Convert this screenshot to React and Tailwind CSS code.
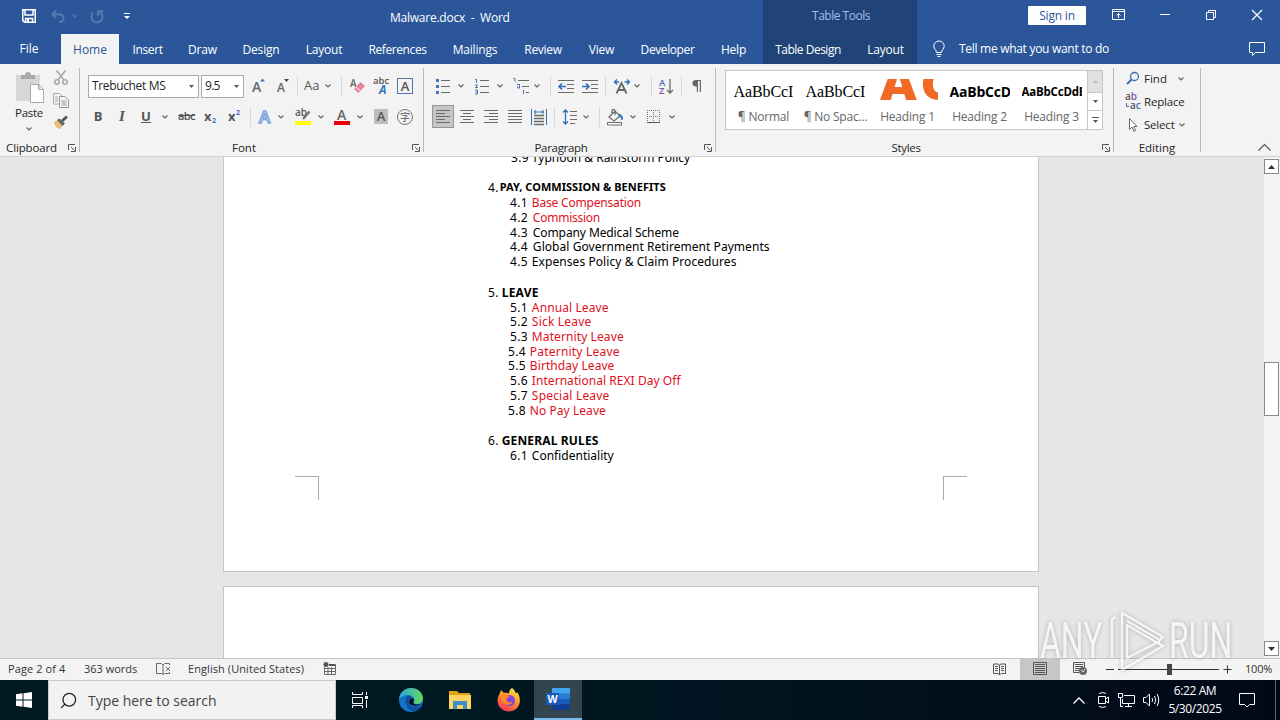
import { Search } from "lucide-react";

const UI = "font-['Open_Sans','Noto_Sans_CJK_SC',sans-serif]";

function Svg({ w = 16, h = 16, className = "", children }) {
    return (
        <svg width={w} height={h} viewBox={`0 0 ${w} ${h}`} fill="none" stroke="#6a6a6a" className={`shrink-0 overflow-visible ${className}`}>
            {children}
        </svg>
    );
}

function Chevron({ className = "", color = "#666" }) {
    return (
        <Svg w={6} h={4} className={className}>
            <path d="M0.5 0.5L3 3L5.5 0.5" stroke={color} strokeWidth="1.2" />
        </Svg>
    );
}

function Caret({ className = "" }) {
    return (
        <Svg w={5} h={3} className={className}>
            <path d="M0 0H5L2.5 3Z" fill="#555" stroke="none" />
        </Svg>
    );
}

function Sep({ className = "" }) {
    return <div className={`h-5 w-px shrink-0 bg-[#d8d8d8] ${className}`} />;
}

function GroupSep() {
    return <div className="mt-1 h-[84px] w-px shrink-0 bg-[#b8b8b8]" />;
}

function Launcher({ className = "" }) {
    return (
        <Svg w={8} h={8} className={className}>
            <path d="M0.5 6V0.5H7M3 3L6.5 6.5M7.5 3V7.5H3" stroke="#555" />
        </Svg>
    );
}

const TABS = [
    { label: "File", box: "w-[61px] pr-[3px] pb-0.5" },
    { label: "Home", box: "w-[58px] bg-[#f3f3f3] text-[#2b579a]" },
    { label: "Insert", box: "w-[57px] tracking-[-0.35px]" },
    { label: "Draw", box: "w-[53px] tracking-[-0.2px]" },
    { label: "Design", box: "w-[64px] tracking-[-0.2px]" },
    { label: "Layout", box: "w-[62px] tracking-[-0.2px]" },
    { label: "References", box: "w-[85px] tracking-[-0.4px]" },
    { label: "Mailings", box: "w-[70px] tracking-[-0.2px]" },
    { label: "Review", box: "w-[66px] tracking-[-0.3px]" },
    { label: "View", box: "w-[51px] tracking-[-0.2px]" },
    { label: "Developer", box: "w-[81px] tracking-[-0.4px]" },
    { label: "Help", box: "w-[51px] tracking-[-0.2px]" },
];

function TitleBar() {
    return (
        <header className="flex h-16 bg-[#2b579a] text-xs text-white">
            <div className="flex w-[763px] flex-col">
                <div className="flex h-8 items-center">
                    <Svg w={14} h={14} className="ml-[22px]">
                        <path d="M0.75 0.75H13.25V13.25H2.5L0.75 11.5Z M3 1V6H11V1 M3.5 13V9.5H10.5V13" stroke="#fff" strokeWidth="1.5" />
                        <path d="M5 10H7V13H5Z" fill="#fff" stroke="none" />
                    </Svg>
                    <Svg w={14} h={13} className="ml-[15px]">
                        <path d="M5 0.5L1.5 4.5L5 8M2 4.5H8.5C14 4.5 14 12 8 12" stroke="#5478b0" strokeWidth="2" />
                    </Svg>
                    <Chevron className="ml-[7px]" color="#5478b0" />
                    <Svg w={14} h={13} className="ml-3">
                        <path d="M3.5 2.5A5.5 5.5 0 1 0 9 1.7M8 6V1.2H13.5" stroke="#5478b0" strokeWidth="2" />
                    </Svg>
                    <Svg w={6} h={6} className="ml-5">
                        <path d="M0 0.5H6" stroke="#fff" />
                        <path d="M0 3H6L3 6Z" fill="#fff" stroke="none" />
                    </Svg>
                    <span className="mt-1 ml-[260px] tracking-[-0.24px] whitespace-pre">Malware.docx  -  Word</span>
                </div>
                <nav className="mt-0.5 flex h-[30px]">
                    {TABS.map((tab) => (
                        <div key={tab.label} className={`flex items-center justify-center pt-0.5 ${tab.box}`}>
                            {tab.label}
                        </div>
                    ))}
                </nav>
            </div>
            <div className="flex w-[154px] flex-col bg-[#204477]">
                <div className="flex h-8 items-center justify-center pl-0.5 tracking-[-0.5px] text-[#a5bde3]">Table Tools</div>
                <div className="flex h-8 items-center pt-1">
                    <span className="w-[90px] text-center tracking-[-0.5px]">Table Design</span>
                    <span className="w-[64px] pl-px text-center tracking-[-0.2px]">Layout</span>
                </div>
            </div>
            <div className="flex flex-1 flex-col">
                <div className="flex h-8 items-center">
                    <button className="ml-[111px] h-[19px] w-[58px] rounded-[1px] bg-white pt-px leading-none tracking-[-0.2px] text-[#2b579a]">Sign in</button>
                    <Svg w={13} h={11} className="-mt-0.5 ml-[26px]">
                        <path d="M0.5 0.5H12.5V10.5H0.5ZM0.5 2.5H12.5M6.5 9V4.5M4.5 6.5L6.5 4.5L8.5 6.5" stroke="#fff" />
                    </Svg>
                    <Svg w={10} h={2} className="-mt-0.5 ml-[35px]">
                        <path d="M0 0.5H10" stroke="#fff" />
                    </Svg>
                    <Svg w={10} h={10} className="-mt-0.5 ml-9">
                        <path d="M0.5 2.5H7.5V9.5H0.5ZM2.5 2.5V0.5H9.5V7.5H7.5" stroke="#fff" />
                    </Svg>
                    <Svg w={10} h={10} className="-mt-0.5 ml-9">
                        <path d="M0 0L10 10M10 0L0 10" stroke="#fff" strokeWidth="1.2" />
                    </Svg>
                </div>
                <div className="flex h-[34px] items-center pt-0.5">
                    <Svg w={12} h={16} className="ml-4">
                        <path d="M3.5 11.5C3.5 9 0.8 8 0.8 5.2A5 5 0 0 1 11.2 5.2C11.2 8 8.5 9 8.5 11.5ZM3.5 13.5H8.5M4.5 15.5H7.5" stroke="#fff" />
                    </Svg>
                    <span className="ml-[14px] tracking-[-0.29px]">Tell me what you want to do</span>
                    <Svg w={17} h={14} className="mr-[14px] ml-auto">
                        <path d="M0.5 0.5H15.5V10.5H6.5L3.5 13.5V10.5H0.5Z" stroke="#fff" />
                    </Svg>
                </div>
            </div>
        </header>
    );
}

function Clipboard() {
    return (
        <section className="flex w-[79px] flex-col">
            <div className="flex h-[76px]">
                <div className="flex w-[49px] flex-col items-center pt-2 pl-[9px]">
                    <Svg w={29} h={31} className="ml-0.5">
                        <path d="M0 3H24V29H0Z" fill="#d8d6d6" stroke="none" />
                        <path d="M5 7V3H9C9 -1 15 -1 15 3H19V7Z" fill="#a9a9a9" stroke="none" />
                        <path d="M14.5 12.5H22.5L27.5 17.5V30.5H14.5ZM22.5 12.5V17.5H27.5" fill="#fff" stroke="#aaa" />
                    </Svg>
                    <span className="mt-0.5 text-[11.5px] leading-4 tracking-[-0.3px]">Paste</span>
                    <Chevron className="mt-1.5" />
                </div>
                <div className="flex w-6 flex-col items-center gap-[7px] pt-1.5">
                    <Svg w={14} h={16}>
                        <path d="M2.5 0.5L10 10M11.5 0.5L4 10" stroke="#aaa" strokeWidth="1.6" />
                        <circle cx="3" cy="12" r="2.2" stroke="#aaa" strokeWidth="1.6" />
                        <circle cx="11" cy="12" r="2.2" stroke="#aaa" strokeWidth="1.6" />
                    </Svg>
                    <Svg w={16} h={15}>
                        <path d="M0.5 0.5H6.5L9 3V11H0.5ZM2 4H5M2 6H5M2 8H5" stroke="#aaa" />
                        <path d="M6.5 3.5H12L15.5 7V14.5H6.5ZM8.5 8H13.5M8.5 10H13.5M8.5 12H13.5" fill="#f3f3f3" stroke="#999" />
                    </Svg>
                    <Svg w={16} h={15}>
                        <path d="M1 7L5 5L10 10L7 14C4 14 2 11 1 7Z" fill="#e8bd73" stroke="none" />
                        <path d="M4 5L6.5 3.5L12 8.5L9.5 11Z" fill="#666" stroke="none" />
                        <path d="M9 6L14 1.5" stroke="#555" strokeWidth="3" />
                    </Svg>
                </div>
            </div>
            <div className="flex h-4 items-center">
                <span className="w-[63px] text-center text-[11.5px] tracking-[-0.15px]">Clipboard</span>
                <Launcher className="ml-[5px]" />
            </div>
        </section>
    );
}

function FontGroup() {
    return (
        <section className="flex w-[343px] flex-col">
            <div className="mt-[11px] flex h-[22px] items-center pl-2">
                <div className="flex h-[23px] w-[111px] items-center border border-[#ababab] bg-white pl-[3px] text-xs tracking-[-0.35px]">
                    Trebuchet MS
                    <Caret className="mr-1 ml-auto" />
                </div>
                <div className="ml-0.5 flex h-[23px] w-[43px] items-center border border-[#ababab] bg-white pl-[3px] text-xs tracking-[-0.7px]">
                    9.5
                    <Caret className="mr-1 ml-auto" />
                </div>
                <Svg w={14} className="ml-2">
                    <text x="0" y="14" fontSize="14" fontWeight="600" fill="#666" stroke="none">A</text>
                    <path d="M8 3.5L10.5 0.5L13 3.5Z" fill="#3b6fb6" stroke="none" />
                </Svg>
                <Svg w={12} className="ml-[11px]">
                    <text x="0" y="14" fontSize="12" fontWeight="600" fill="#666" stroke="none">A</text>
                    <path d="M7 1H12L9.5 4Z" fill="#444" stroke="none" />
                </Svg>
                <Sep className="ml-2" />
                <span className="ml-1.5 w-4 text-[13px] text-[#555]">Aa</span>
                <Chevron className="ml-[5px]" />
                <Sep className="ml-[10px]" />
                <Svg className="ml-2">
                    <text x="0" y="8.5" fontSize="10" fontWeight="600" fill="#666" stroke="none">A</text>
                    <path d="M4 11L10.5 4L15 8L8.5 15Z" fill="#e8829a" stroke="none" />
                    <path d="M6 9L10.5 13" stroke="#fff" />
                </Svg>
                <Svg className="ml-2">
                    <text x="-1" y="6" fontSize="9.5" fontWeight="600" fill="#555" stroke="none">abc</text>
                    <text x="5" y="16" fontSize="12" fontWeight="700" fontStyle="italic" fill="#3b78bd" stroke="none">A</text>
                </Svg>
                <div className="ml-[7px] flex size-4 items-center justify-center border border-[#5376a8] text-[13px] leading-none font-semibold text-[#555]">A</div>
            </div>
            <div className="mt-2 flex h-[23px] items-center text-[#555]">
                <span className="ml-2 w-5 text-center text-[13px] font-bold">B</span>
                <span className="ml-1 w-5 text-center font-['Liberation_Serif',serif] text-[15px] font-bold italic">I</span>
                <span className="ml-1 w-5 text-center text-[13px] font-bold underline">U</span>
                <Chevron className="ml-[6px]" />
                <span className="ml-[10px] w-4 text-[11px] font-semibold tracking-[-0.6px] line-through">abc</span>
                <Svg className="ml-[10px]">
                    <text x="0" y="12" fontSize="13" fontWeight="700" fill="#555" stroke="none">x</text>
                    <text x="8" y="14" fontSize="7" fontWeight="700" fill="#3b6fb6" stroke="none">2</text>
                </Svg>
                <Svg className="ml-2">
                    <text x="0" y="12" fontSize="13" fontWeight="700" fill="#555" stroke="none">x</text>
                    <text x="8" y="6" fontSize="7" fontWeight="700" fill="#3b6fb6" stroke="none">2</text>
                </Svg>
                <Sep className="ml-1.5" />
                <Svg className="ml-[7px]">
                    <text x="1" y="14" fontSize="17" fontWeight="600" fill="#fff" stroke="#7ba4dd" strokeWidth="1.4">A</text>
                </Svg>
                <Chevron className="ml-1" />
                <Svg className="ml-[11px]">
                    <text x="0" y="7" fontSize="10" fontWeight="600" fill="#555" stroke="none">ab</text>
                    <path d="M8 10L14.5 2.5" stroke="#777" strokeWidth="2.5" />
                    <path d="M0 12H16V16H0Z" fill="#ffff00" stroke="none" />
                </Svg>
                <Chevron className="ml-[7px]" />
                <Svg className="ml-[10px]">
                    <text x="3" y="11" fontSize="14" fontWeight="600" fill="#666" stroke="none">A</text>
                    <path d="M0 12H16V16H0Z" fill="#e8000c" stroke="none" />
                </Svg>
                <Chevron className="ml-[7px]" />
                <div className="ml-[11px] flex h-[15px] w-[14px] items-center justify-center bg-[#bdbdbd] text-[13px] leading-none font-semibold">A</div>
                <div className="ml-[9px] flex size-4 items-center justify-center rounded-full border border-[#777] text-[10px] leading-none">字</div>
            </div>
            <div className="mt-3 flex h-4 items-center">
                <span className="ml-[90px] w-[148px] text-center text-[11.5px]">Font</span>
                <Launcher className="ml-[94px]" />
            </div>
        </section>
    );
}

function Paragraph() {
    return (
        <section className="flex w-[291px] flex-col">
            <div className="mt-[10px] flex h-[23px] items-center">
                <Svg className="ml-[11px]">
                    <path d="M6 2.5H15M6 8.5H15M6 14.5H15" />
                    <path d="M1 1H4V4H1ZM1 7H4V10H1ZM1 13H4V16H1Z" fill="#4472b8" stroke="none" />
                </Svg>
                <Chevron className="ml-[7px]" />
                <Svg className="ml-[10px]">
                    <path d="M6 2.5H15M6 8.5H15M6 14.5H15" />
                    <path d="M1 1.5H2.5V5M1 7H3.5L1.5 9.5H4M1 12H3.5V16H1M1.5 14H3.5" stroke="#4472b8" />
                </Svg>
                <Chevron className="ml-[7px]" />
                <Svg className="ml-[10px]">
                    <path d="M5 2.5H16M9 8.5H16M13 14.5H16" />
                    <path d="M0.5 0.5H2V4M4 6.5H6.5V10H4.5V8.5M10.5 12V16" stroke="#4472b8" />
                </Svg>
                <Chevron className="ml-[5px]" />
                <Sep className="ml-[10px]" />
                <Svg className="ml-[7px]">
                    <path d="M0 2.5H16M9 6.5H16M9 10.5H16M0 14.5H16" />
                    <path d="M8 8.5H1M4 5.5L1 8.5L4 11.5" stroke="#2f70b7" strokeWidth="1.6" />
                </Svg>
                <Svg className="ml-2">
                    <path d="M0 2.5H16M9 6.5H16M9 10.5H16M0 14.5H16" />
                    <path d="M0 8.5H7M4 5.5L7 8.5L4 11.5" stroke="#2f70b7" strokeWidth="1.6" />
                </Svg>
                <Sep className="ml-[7px]" />
                <Svg className="ml-2">
                    <path d="M2.5 15.5L7.5 5L12.5 15.5M4.5 12H10.5" stroke="#666" strokeWidth="1.8" />
                    <path d="M0 4H5M3 1.5L0.5 4L3 6.5M10.5 4H15M13 1.5L15.5 4L13 6.5" stroke="#2f70b7" strokeWidth="1.3" />
                </Svg>
                <Chevron className="ml-1" />
                <Sep className="ml-[11px]" />
                <Svg className="ml-[6px]">
                    <text x="1" y="7.5" fontSize="9.5" fontWeight="600" fill="#3b6fb6" stroke="none">A</text>
                    <text x="1" y="16" fontSize="9.5" fontWeight="600" fill="#8254a8" stroke="none">Z</text>
                    <path d="M12 1V15M9 12L12 15L15 12" strokeWidth="1.3" />
                </Svg>
                <Sep className="ml-[7px]" />
                <Svg w={12} h={14} className="ml-[9px]">
                    <path d="M5 1H10V13H8.8V2H7V13H5.8V7.5C0 8 0 1 5 1Z" fill="#666" stroke="none" />
                </Svg>
            </div>
            <div className="mt-2 flex h-[23px] items-center">
                <div className="ml-2 flex h-[23px] w-[22px] items-center justify-center border border-[#969696] bg-[#c5c5c5]">
                    <Svg w={14} h={13}>
                        <path d="M0 0.5H14M0 3.5H9M0 6.5H14M0 9.5H9M0 12.5H14" />
                    </Svg>
                </div>
                <Svg w={14} h={13} className="ml-[6px]">
                    <path d="M0 0.5H14M3 3.5H11M0 6.5H14M3 9.5H11M0 12.5H14" />
                </Svg>
                <Svg w={14} h={13} className="ml-[10px]">
                    <path d="M0 0.5H14M5 3.5H14M0 6.5H14M5 9.5H14M0 12.5H14" />
                </Svg>
                <Svg w={14} h={13} className="ml-[10px]">
                    <path d="M0 0.5H14M0 3.5H14M0 6.5H14M0 9.5H14M0 12.5H14" />
                </Svg>
                <Svg className="ml-[9px]">
                    <path d="M3 6.5H13M3 9.5H13M3 12.5H13M3 15.5H13" strokeWidth="1.3" />
                    <path d="M0.5 0V16M15.5 0V16M3 3H13M5 1L3 3L5 5M11 1L13 3L11 5" stroke="#2f70b7" />
                </Svg>
                <Sep className="ml-[7px]" />
                <Svg className="ml-2">
                    <path d="M7 2.5H14M7 6.5H14M7 10.5H14M7 14.5H12" />
                    <path d="M2.5 1V15M0 3.5L2.5 1L5 3.5M0 12.5L2.5 15L5 12.5" stroke="#2f70b7" strokeWidth="1.3" />
                </Svg>
                <Chevron className="ml-1" />
                <Sep className="ml-[10px]" />
                <Svg className="ml-[7px]">
                    <path d="M2 8L8 2L13 7L7 12ZM5 5V1.5C5 0 8 0 8 1.5V6" strokeWidth="1.2" />
                    <path d="M12 5C15 6 16 8 15 11C14 8 13 7 12 7Z" fill="#3b78bd" stroke="#3b78bd" />
                    <path d="M0.5 13.5H14.5V16H0.5Z" fill="#fff" />
                </Svg>
                <Chevron className="ml-[7px]" />
                <Svg w={13} h={13} className="ml-[11px]">
                    <path d="M0 0.5H13M0.5 0V13M12.5 0V13M6.5 0V13M0 6.5H13" stroke="#777" strokeDasharray="1 1" />
                    <path d="M0 12.5H13" stroke="#555" />
                </Svg>
                <Chevron className="ml-[9px]" />
            </div>
            <div className="mt-3 flex h-4 items-center">
                <span className="ml-[97px] w-20 text-center text-[11.5px] tracking-[-0.3px]">Paragraph</span>
                <Launcher className="ml-[103px]" />
            </div>
        </section>
    );
}

const STYLES = [
    { name: "¶ Normal", sample: "AaBbCcI", font: "font-['Liberation_Serif',serif] text-base tracking-[-0.1px] text-black" },
    { name: "¶ No Spac...", sample: "AaBbCcI", font: "font-['Liberation_Serif',serif] text-base tracking-[-0.1px] text-black" },
    { name: "Heading 1", sample: "AC", font: "inline-block self-start -mt-[18px] ml-0.5 origin-left scale-x-115 font-extrabold text-[44px] leading-none tracking-[3px] text-[#f06a25]" },
    { name: "Heading 2", sample: "AaBbCcD", font: "font-bold text-sm tracking-[-0.2px] text-black" },
    { name: "Heading 3", sample: "AaBbCcDdE", font: "font-bold text-[11.5px] tracking-[-0.2px] text-black" },
];

function Styles() {
    return (
        <section className="flex w-[397px] flex-col">
            <div className="mt-1.5 ml-[9px] flex h-[60px] w-[378px] border border-[#c6c6c6] bg-white">
                {STYLES.map((style, i) => (
                    <div key={i} className="ml-px flex w-[71px] flex-col items-center first:ml-0.5">
                        <div className="mt-2 flex h-[26px] w-[60px] items-center overflow-hidden">
                            <span className={`whitespace-nowrap ${style.font}`}>{style.sample}</span>
                        </div>
                        <span className="mt-0.5 text-xs leading-5 tracking-[-0.2px] whitespace-nowrap text-[#666]">{style.name}</span>
                    </div>
                ))}
                <div className="ml-auto flex w-[15px] flex-col border-l border-[#c6c6c6]">
                    <div className="flex h-[21px] items-center justify-center bg-[#e1e1e1]">
                        <Svg w={5} h={3}><path d="M0 3H5L2.5 0Z" fill="#bbb" stroke="none" /></Svg>
                    </div>
                    <div className="flex h-[19px] items-center justify-center border-y border-[#c6c6c6]"><Caret /></div>
                    <div className="flex h-[18px] items-center justify-center">
                        <Svg w={7} h={6}>
                            <path d="M0 0.5H7" stroke="#555" />
                            <path d="M1 3H6L3.5 6Z" fill="#555" stroke="none" />
                        </Svg>
                    </div>
                </div>
            </div>
            <div className="mt-[10px] flex h-4 items-center">
                <span className="ml-[150px] w-20 text-center text-[11.5px] tracking-[-0.3px]">Styles</span>
                <Launcher className="ml-[156px]" />
            </div>
        </section>
    );
}

function Editing() {
    return (
        <section className="flex w-[86px] flex-col text-[11.5px]">
            <div className="mt-[3px] ml-3 flex h-[23px] items-center">
                <Svg w={14} h={13}>
                    <circle cx="8.5" cy="4.5" r="4" stroke="#3b6fa8" strokeWidth="1.3" />
                    <path d="M5.5 7.5L1 12" stroke="#3b6fa8" strokeWidth="2" />
                </Svg>
                <span className="ml-1 w-[34px]">Find</span>
                <Chevron />
            </div>
            <div className="ml-[11px] flex h-[23px] items-center">
                <Svg>
                    <text x="0" y="6" fontSize="10" fontWeight="600" fill="#555" stroke="none">a<tspan fill="#8254a8">b</tspan></text>
                    <text x="5" y="15" fontSize="10" fontWeight="600" fill="#555" stroke="none">a<tspan fill="#3b6fb6">c</tspan></text>
                    <path d="M1.5 9V12.5H4" stroke="#3b6fb6" />
                </Svg>
                <span className="ml-[3px] tracking-[-0.2px]">Replace</span>
            </div>
            <div className="ml-[11px] flex h-[23px] items-center">
                <Svg w={16} h={14}>
                    <path d="M4.5 0.5V11.5L7 9L9 13.5L10.5 12.5L8.8 8.5H12Z" fill="#fff" />
                </Svg>
                <span className="ml-[3px] w-[35px] tracking-[-0.2px]">Select</span>
                <Chevron />
            </div>
            <span className="mt-1 w-full text-center leading-4">Editing</span>
        </section>
    );
}

function Ribbon() {
    return (
        <div className="flex h-[93px] border-b border-[#d2d0ce] bg-[#f3f3f3] text-[#262626]">
            <Clipboard />
            <GroupSep />
            <FontGroup />
            <GroupSep />
            <Paragraph />
            <GroupSep />
            <Styles />
            <GroupSep />
            <Editing />
            <GroupSep />
            <Svg w={13} h={7} className="mt-auto mr-[9px] mb-[5px] ml-auto">
                <path d="M0.5 6.5L6.5 0.5L12.5 6.5" stroke="#555" strokeWidth="1.2" />
            </Svg>
        </div>
    );
}

const LINES = [
    { num: "3.9", text: "Typhoon & Rainstorm Policy", row: "h-[15px] pl-[287px]", style: "ml-[3px]" },
    { row: "h-[15px]" },
    { num: "4.", text: "PAY, COMMISSION & BENEFITS", row: "h-[15px] pl-[264px]", style: "ml-px font-bold text-[11px] tracking-[0.03px]" },
    { num: "4.1", text: "Base Compensation", row: "h-[15px] pl-[286px]", style: "ml-1 tracking-[-0.19px]", red: true },
    { num: "4.2", text: "Commission", row: "h-[15px] pl-[286px]", style: "ml-[5px] tracking-[-0.25px]", red: true },
    { num: "4.3", text: "Company Medical Scheme", row: "h-[15px] pl-[286px]", style: "ml-[5px] tracking-[-0.1px]" },
    { num: "4.4", text: "Global Government Retirement Payments", row: "h-[14px] pl-[286px]", style: "ml-[5px] tracking-[0.05px]" },
    { num: "4.5", text: "Expenses Policy & Claim Procedures", row: "h-[15px] pl-[286px]", style: "ml-1 tracking-[0.07px]" },
    { row: "h-4" },
    { num: "5.", text: "LEAVE", row: "h-[15px] pl-[264px]", style: "ml-[3px] font-bold tracking-[0.25px]" },
    { num: "5.1", text: "Annual Leave", row: "h-[15px] pl-[286px]", style: "ml-1 tracking-[0.1px]", red: true },
    { num: "5.2", text: "Sick Leave", row: "h-[14px] pl-[286px]", style: "ml-1 tracking-[0.2px]", red: true },
    { num: "5.3", text: "Maternity Leave", row: "h-[15px] pl-[286px]", style: "ml-1 tracking-[0.1px]", red: true },
    { num: "5.4", text: "Paternity Leave", row: "h-[15px] pl-[284px]", style: "ml-1 tracking-[0.2px]", red: true },
    { num: "5.5", text: "Birthday Leave", row: "h-[14px] pl-[284px]", style: "ml-1 tracking-[0.07px]", red: true },
    { num: "5.6", text: "International REXI Day Off", row: "h-[15px] pl-[286px]", style: "ml-1 tracking-[0.05px]", red: true },
    { num: "5.7", text: "Special Leave", row: "h-[15px] pl-[286px]", style: "ml-1 tracking-[0.19px]", red: true },
    { num: "5.8", text: "No Pay Leave", row: "h-[15px] pl-[284px]", style: "ml-1 tracking-[0.05px]", red: true },
    { row: "h-[15px]" },
    { num: "6.", text: "GENERAL RULES", row: "h-[15px] pl-[264px]", style: "ml-[3px] font-bold tracking-[0.15px]" },
    { num: "6.1", text: "Confidentiality", row: "h-[15px] pl-[286px]", style: "ml-1" },
];

function Document() {
    return (
        <main className="flex h-[501px] bg-[#e6e6e6]">
            <div className="flex h-full flex-1 flex-col overflow-hidden pl-[223px]">
                <div className="h-[415px] w-[816px] shrink-0 overflow-hidden border border-t-0 border-[#c6c6c6] bg-white">
                    <div className="-mt-[7px] font-['Noto_Sans','Open_Sans',sans-serif] text-[12px] text-black">
                        {LINES.map((line, i) => (
                            <div key={i} className={`flex items-center whitespace-nowrap ${line.row}`}>
                                {line.num && <span className="tracking-[0.3px]">{line.num}</span>}
                                {line.text && (
                                    <span className={`${line.style} ${line.red ? "text-[#e0101c]" : ""}`}>{line.text}</span>
                                )}
                            </div>
                        ))}
                    </div>
                    {/* margin crop marks */}
                    <div className="mt-[13px] flex justify-between pr-[71px] pl-[71px]">
                        <div className="size-6 border-t border-r border-[#ababab]" />
                        <div className="size-6 border-t border-l border-[#ababab]" />
                    </div>
                </div>
                <div className="mt-[14px] h-[90px] w-[816px] shrink-0 border border-[#c6c6c6] bg-white" />
            </div>
            <div className="flex w-4 flex-col bg-[#f3f3f3] pt-0.5 pb-0.5">
                <div className="flex h-[15px] w-[15px] items-center justify-center border border-[#8a8a8a] bg-white">
                    <Svg w={7} h={4}><path d="M0 4H7L3.5 0Z" fill="#333" stroke="none" /></Svg>
                </div>
                <div className="mt-[188px] h-[54px] w-[15px] border border-[#8a8a8a] bg-white" />
                <div className="mt-auto flex h-[15px] w-[15px] items-center justify-center border border-[#8a8a8a] bg-white">
                    <Svg w={7} h={4}><path d="M0 0H7L3.5 4Z" fill="#333" stroke="none" /></Svg>
                </div>
            </div>
        </main>
    );
}

function StatusBar() {
    return (
        <div className="flex h-[22px] items-center border-t border-[#c6c6c6] bg-[#f3f3f3] text-[11px] text-[#333]">
            <span className="ml-2 w-[76px] tracking-[0.1px]">Page 2 of 4</span>
            <span className="w-[72px]">363 words</span>
            <Svg w={15} h={13} className="-mt-0.5">
                <path d="M0.5 1.5H5.5L7 3V12.5L5.5 11.5H0.5ZM7 3L8.5 1.5H13.5V3M7 12.5L8.5 11.5H13.5V10M10 5L14 9M14 5L10 9" />
            </Svg>
            <span className="ml-[17px] w-[135px] tracking-[0.08px]">English (United States)</span>
            <Svg w={13} h={13} className="-mt-0.5">
                <path d="M1.5 5V12.5H12.5V2.5H6M2 6.5H12M2 9.5H12M5 5V12M8.5 5V12" />
                <circle cx="3" cy="2.5" r="2.5" fill="#555" stroke="none" />
                <path d="M6 2H12V4H6Z" fill="#555" stroke="none" />
            </Svg>
            <Svg w={13} h={12} className="-mt-0.5 mr-[14px] ml-auto">
                <path d="M6.5 2L5 1H0.5V10.5H5L6.5 12L8 10.5H12.5V1H8L6.5 2V12M2 3.5H5M2 5.5H5M2 7.5H5M8 3.5H11M8 5.5H11M8 7.5H11" stroke="#555" />
            </Svg>
            <div className="flex h-full w-10 items-center justify-center bg-[#c6c6c6]">
                <Svg w={14} h={13} className="-mt-0.5">
                    <path d="M0.5 0.5H13.5V12.5H0.5ZM2 2.5H12M2 4.5H12M2 6.5H12M2 8.5H12M2 10.5H12" stroke="#555" />
                </Svg>
            </div>
            <Svg w={14} h={13} className="-mt-0.5 ml-[13px]">
                <path d="M6 10.5H0.5V0.5H11.5V5M2 2.5H10M2 4.5H10M2 6.5H7M2 8.5H6" stroke="#555" />
                <circle cx="10" cy="9" r="4" fill="#666" stroke="none" />
                <path d="M8 8L10 10L12 7" stroke="#ddd" />
            </Svg>
            <Svg w={8} h={1} className="ml-[19px]"><path d="M0 0.5H8" stroke="#333" /></Svg>
            <Svg w={101} h={11} className="ml-[4px]">
                <path d="M0 5.5H101" stroke="#333" />
                <path d="M49 0H54V11H49Z" fill="#444" stroke="none" />
            </Svg>
            <Svg w={9} h={9} className="ml-[4px]"><path d="M0.5 4.5H8.5M4.5 0.5V8.5" stroke="#333" /></Svg>
            <span className="mr-[8px] ml-[13px] w-[27px] tracking-[-0.2px]">100%</span>
        </div>
    );
}

function EdgeLogo() {
    return (
        <svg width="24" height="24" viewBox="0 0 24 24">
            <defs>
                <linearGradient id="edgeTop" x1="0" x2="1">
                    <stop offset="0" stopColor="#2aa8e0" />
                    <stop offset="1" stopColor="#64d85a" />
                </linearGradient>
            </defs>
            <circle cx="12" cy="12" r="12" fill="#1473c8" />
            <path d="M0 11C1 4 6 0 12 0C19 0 24 5 24 10.5C24 14 21 16 18 16C15 16 14 15 14.5 14C17 10 13 7 9 7C5 7 1.5 9 0 11Z" fill="url(#edgeTop)" />
            <path d="M9 7.5C4 11 7 22 15 23.5C19 22.5 22 20 23 17.5C19 20 10.5 20 9.5 14C9.5 11.5 11 10 12.5 9.5C12 8 10.5 7.3 9 7.5Z" fill="#124e9a" />
            <path d="M14.5 14C13.5 16 17 18 22.5 15.5C20 19 10 19 10 13.5C10 11 13 9.5 14 10.5C15.5 11.5 15 13 14.5 14Z" fill="#04151f" />
        </svg>
    );
}

function FirefoxLogo() {
    return (
        <svg width="24" height="24" viewBox="0 0 24 24">
            <defs>
                <linearGradient id="fox" x1="0.8" y1="0" x2="0.3" y2="1">
                    <stop offset="0" stopColor="#ffe645" />
                    <stop offset="0.5" stopColor="#ff9026" />
                    <stop offset="1" stopColor="#f7305e" />
                </linearGradient>
            </defs>
            <path d="M15 0C17 1 18 3 18.5 5C19.5 5 20 4.5 20 4C25 10 24 23 12 23.5C5 23.5 0.5 18 0.5 12.5C0.5 9 2 7 3 5L4 2L7 5C9 4.5 11 5 12 5.5C12 3 13 1 15 0Z" fill="url(#fox)" />
            <circle cx="12.5" cy="12.5" r="5.5" fill="#8445dc" />
            <path d="M4 6C7 5 10 6 12.5 9C11 9.5 9 10 9.5 12C10 14.5 13 15 15.5 14C14 18 6 18 5 12Z" fill="#ff8a22" />
        </svg>
    );
}

function Taskbar() {
    return (
        <footer className="flex h-10 items-center bg-linear-to-r from-[#001a22] via-[#001722] to-[#020817] text-white">
            <div className="flex w-12 justify-center">
                <svg width="16" height="16" viewBox="0 0 16 16" fill="#fff">
                    <path d="M0 2.2L6.5 1.3V7.5H0ZM7.5 1.2L16 0V7.5H7.5ZM0 8.5H6.5V14.7L0 13.8ZM7.5 8.5H16V16L7.5 14.8Z" />
                </svg>
            </div>
            <div className="flex h-full w-72 items-center border border-[#c9c9c9] bg-[#f2f2f2] text-[#444]">
                <Search size={19} strokeWidth={1.6} className="ml-[10px] -scale-x-100 text-[#222]" />
                <span className="mt-0.5 ml-[10px] text-sm tracking-[-0.02px]">Type here to search</span>
            </div>
            <Svg w={17} h={16} className="ml-[16px]">
                <path d="M0.5 0V2.5H10.5V0M0.5 5.5H10.5V11.5H0.5ZM0.5 16V13.5H10.5V16M14.5 0V3M14.5 8V16" stroke="#fff" />
                <path d="M13 4H16V7H13Z" fill="#fff" stroke="none" />
            </Svg>
            <div className="ml-[30px]"><EdgeLogo /></div>
            <svg width="22" height="20" viewBox="0 0 22 20" className="ml-[26px]">
                <path d="M0 1H8L10 3H21V18H0Z" fill="#e5a018" />
                <path d="M0 5H22V19H0Z" fill="#fcd462" />
                <path d="M4 19V11H18V19H14V15H8V19Z" fill="#3d8fc9" />
            </svg>
            <div className="ml-[26px]"><FirefoxLogo /></div>
            <div className="ml-[13px] flex h-full w-12 items-center justify-center border-b-2 border-[#76b9ed] bg-[#33454e]">
                <svg width="24" height="22" viewBox="0 0 24 22">
                    <path d="M6 0H24V6H6Z" fill="#41a5ee" />
                    <path d="M6 5.5H24V11H6Z" fill="#2b7cd3" />
                    <path d="M6 11H24V16H6Z" fill="#185abd" />
                    <path d="M6 16H24V22H6Z" fill="#103f91" />
                    <path d="M0 5H13V17H0Z" fill="#185abd" />
                    <text x="1.5" y="15" fontSize="10.5" fontWeight="700" fill="#fff">W</text>
                </svg>
            </div>
            <Svg w={12} h={7} className="ml-auto">
                <path d="M0.5 6.5L6 1L11.5 6.5" stroke="#fff" strokeWidth="1.3" />
            </Svg>
            <Svg w={12} h={16} className="ml-[12px]">
                <path d="M1.5 4.5H8.5V11.5H1.5ZM8.5 7L11.5 5V11L8.5 9M2 1.5Q6 -0.5 9 1.5M2 14.5Q6 16.5 9 14.5" stroke="#fff" />
            </Svg>
            <Svg w={17} h={14} className="ml-[9px]">
                <path d="M6 2.5H16.5V10.5H4.5V6M10.5 10.5V13.5M7 13.5H14M0.5 0.5H4.5V4.5H0.5ZM2.5 5V13.5H5" stroke="#fff" />
            </Svg>
            <Svg w={17} h={14} className="ml-[8px]">
                <path d="M0.5 4.5H3L6.5 1V13L3 9.5H0.5ZM9 5Q10.5 7 9 9M11.5 3Q14 7 11.5 11M14 1Q17.5 7 14 13" stroke="#fff" />
            </Svg>
            <div className="ml-[8px] flex w-[54px] flex-col items-center text-xs leading-[18px] tracking-[-0.4px]">
                <span>6:22 AM</span>
                <span>5/30/2025</span>
            </div>
            <Svg w={16} h={15} className="ml-[17px]">
                <path d="M0.5 0.5H15.5V11.5H10.5L8 14L5.5 11.5H0.5Z" stroke="#fff" />
            </Svg>
            <div className="mr-1 ml-5 h-full w-px bg-[#5c6670]" />
        </footer>
    );
}

function Watermark() {
    return (
        <svg width="200" height="66" viewBox="0 0 200 66" className="absolute top-[608px] left-[1036px] drop-shadow-[0_0_2px_rgba(0,0,0,0.4)]" opacity="0.6">
            <g className="font-[Roboto,sans-serif]" fill="#fff" fontSize="50">
                <text transform="translate(4 50) scale(0.64 1)">ANY</text>
                <text transform="translate(133 50) scale(0.64 1)">RUN</text>
            </g>
            <path d="M76 50V11L80 9M86 62V5L127 29L124 32L91 13M86 62L127 38L91 17V50L124 33" fill="none" stroke="#fff" strokeWidth="2.5" strokeLinejoin="round" />
        </svg>
    );
}

export default function App() {
    return (
        <div className={`relative flex h-[720px] w-[1280px] flex-col overflow-hidden ${UI}`}>
            <TitleBar />
            <Ribbon />
            <Document />
            <StatusBar />
            <Taskbar />
            <Watermark />
        </div>
    );
}
